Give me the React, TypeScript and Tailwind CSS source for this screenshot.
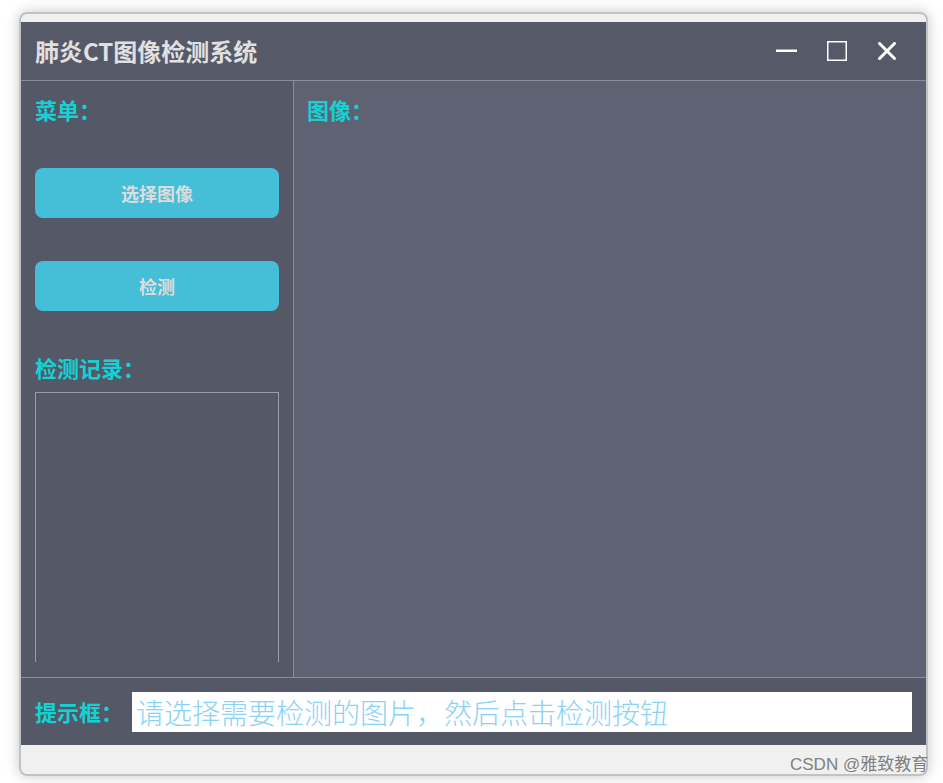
import React from "react";

const cjk = { fontFamily: '"Noto Sans CJK SC", "Noto Sans", sans-serif' };

function TitleIcons() {
  return (
    <div className="flex items-center pr-[30px]">
      <svg width="21" height="20" viewBox="0 0 21 20" className="block">
        <rect x="0" y="8.5" width="21" height="2.5" fill="#ffffff" />
      </svg>
      <svg width="20" height="20" viewBox="0 0 20 20" className="block ml-[30px]">
        <rect x="0.75" y="0.75" width="18.5" height="18.5" fill="none" stroke="#ffffff" strokeWidth="1.5" />
      </svg>
      <svg width="18" height="18" viewBox="0 0 18 18" className="block ml-[31px]">
        <path d="M1.5 1.5 L16.5 16.5 M16.5 1.5 L1.5 16.5" stroke="#ffffff" strokeWidth="3" strokeLinecap="square" fill="none" />
      </svg>
    </div>
  );
}

export default function App() {
  return (
    <div className="relative w-[943px] h-[783px] bg-white pt-[12px] pl-[19px] overflow-hidden" style={cjk}>
      <div className="w-[909px] h-[764px] rounded-[8px] border-2 border-[#c2c2c2] bg-[#f0f0f0] pt-[8px] shadow-[0_0_14px_rgba(0,0,0,0.22)]">
        <div className="h-[723px] flex flex-col">
          {/* Title bar */}
          <div className="h-[58px] bg-[#555968] flex items-center justify-between">
            <div className="pl-[14px] text-[24px] leading-[30px] font-bold text-[#e0e0e0]">
              肺炎CT图像检测系统
            </div>
            <TitleIcons />
          </div>
          <div className="h-px bg-[#8b8e97]" />
          {/* Middle */}
          <div className="h-[596px] flex">
            <div className="w-[272px] bg-[#555867] pl-[14px] flex flex-col">
              <div className="mt-[17px] text-[22px] leading-[22px] font-bold text-[#14d2d4]">菜单：</div>
              <button className="mt-[48px] w-[244px] h-[50px] rounded-[8px] bg-[#45bfd8] text-[18px] font-bold text-[#dcdcdc] flex items-center justify-center">
                选择图像
              </button>
              <button className="mt-[43px] w-[244px] h-[50px] rounded-[8px] bg-[#45bfd8] text-[18px] font-bold text-[#dcdcdc] flex items-center justify-center">
                检测
              </button>
              <div className="mt-[45px] text-[22px] leading-[22px] font-bold text-[#14d2d4]">检测记录：</div>
              <div className="mt-[14px] w-[244px] h-[270px] border-t border-l border-r border-[#9a9ca3]" />
            </div>
            <div className="w-px bg-[#8b8e97]" />
            <div className="flex-1 bg-[#5e6272] pl-[13px]">
              <div className="mt-[17px] text-[22px] leading-[22px] font-bold text-[#14d2d4]">图像：</div>
            </div>
          </div>
          <div className="h-px bg-[#8b8e97]" />
          {/* Bottom bar */}
          <div className="h-[67px] bg-[#555867] flex items-center pl-[14px]">
            <div className="w-[97px] text-[22px] leading-[22px] font-bold text-[#14d2d4] -mt-[2px]">提示框：</div>
            <div className="w-[780px] h-[40px] bg-white flex items-center pl-[4px] overflow-hidden">
              <span className="text-[28px] leading-[40px] font-light text-[#8bd2f7] whitespace-nowrap">
                请选择需要检测的图片，然后点击检测按钮
              </span>
            </div>
          </div>
        </div>
      </div>
      <div
        className="absolute left-[790px] top-[754px] text-[17px] leading-[22px] text-[#808080] whitespace-nowrap"
        style={{ fontFamily: '"Liberation Sans", "Noto Sans CJK SC", sans-serif' }}
      >
        CSDN @雅致教育
      </div>
    </div>
  );
}
